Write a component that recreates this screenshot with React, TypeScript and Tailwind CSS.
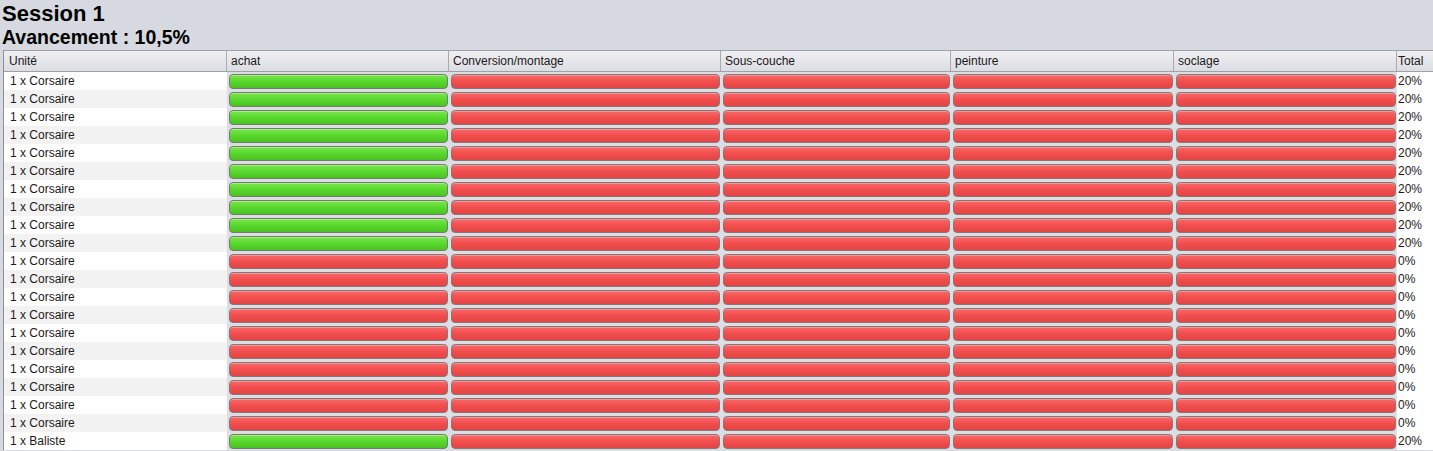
const columns = [
  { label: "Unité", width: "w-[223px]" },
  { label: "achat", width: "w-[222px]" },
  { label: "Conversion/montage", width: "w-[272px]" },
  { label: "Sous-couche", width: "w-[230px]" },
  { label: "peinture", width: "w-[223px]" },
  { label: "soclage", width: "w-[223px]" },
];

type Row = { name: string; done: boolean[]; total: string };

const rows: Row[] = [
  ...Array.from({ length: 10 }, () => ({
    name: "1 x Corsaire",
    done: [true, false, false, false, false],
    total: "20%",
  })),
  ...Array.from({ length: 10 }, () => ({
    name: "1 x Corsaire",
    done: [false, false, false, false, false],
    total: "0%",
  })),
  { name: "1 x Baliste", done: [true, false, false, false, false], total: "20%" },
];

function Bar({ done }: { done: boolean }) {
  return (
    <div
      className={
        done
          ? "h-[15px] rounded-[4px] border border-[#737d6e] bg-gradient-to-b from-[#78e648] via-[#58d82e] to-[#4ac222] shadow-[inset_0_1px_0_rgba(255,255,255,0.35)]"
          : "h-[15px] rounded-[4px] border border-[#847878] bg-gradient-to-b from-[#f86868] via-[#f24e4e] to-[#e24444] shadow-[inset_0_1px_0_rgba(255,255,255,0.3)]"
      }
    />
  );
}

export default function App() {
  return (
    <div className="w-[1433px] h-[451px] overflow-hidden bg-[#d6d9df] font-['Liberation_Sans',Arial,sans-serif] text-[12px] text-[#1a1a1a]">
      {/* Titles */}
      <div className="pl-[2px] pt-[2px] mb-[2px]">
        <h1 className="font-bold text-[22px] leading-[24px] text-black">Session 1</h1>
        <h2 className="font-bold text-[19.5px] leading-[22px] text-black">
          Avancement : 10,5%
        </h2>
      </div>

      {/* Table */}
      <div className="ml-[3px] border-l border-[#8c8f95]">
        {/* Header */}
        <div className="flex h-[22px] border-t border-b border-[#9ea1a8] bg-gradient-to-b from-[#f0f0f3] to-[#dcdde2]">
          {columns.map((c, i) => (
            <div
              key={c.label}
              className={`${c.width} flex items-center border-r border-[#a7aab0] ${i === 0 ? "pl-[5px]" : "pl-[4px]"}`}
            >
              {c.label}
            </div>
          ))}
          <div className="flex-1 flex items-center pl-[1px]">Total</div>
        </div>

        {/* Rows */}
        {rows.map((r, i) => (
          <div key={i} className="flex h-[18px]">
            <div
              className={`w-[223px] flex items-center pl-[6px] ${i % 2 === 0 ? "bg-white" : "bg-[#f2f2f2]"}`}
            >
              {r.name}
            </div>
            {r.done.map((d, j) => (
              <div
                key={j}
                className={`${columns[j + 1].width} pl-[2px] pr-[1px] pt-[2px] bg-[#dcdee3]`}
              >
                <Bar done={d} />
              </div>
            ))}
            <div className="flex-1 flex items-center bg-white pl-[1px]">{r.total}</div>
          </div>
        ))}
      </div>
    </div>
  );
}
